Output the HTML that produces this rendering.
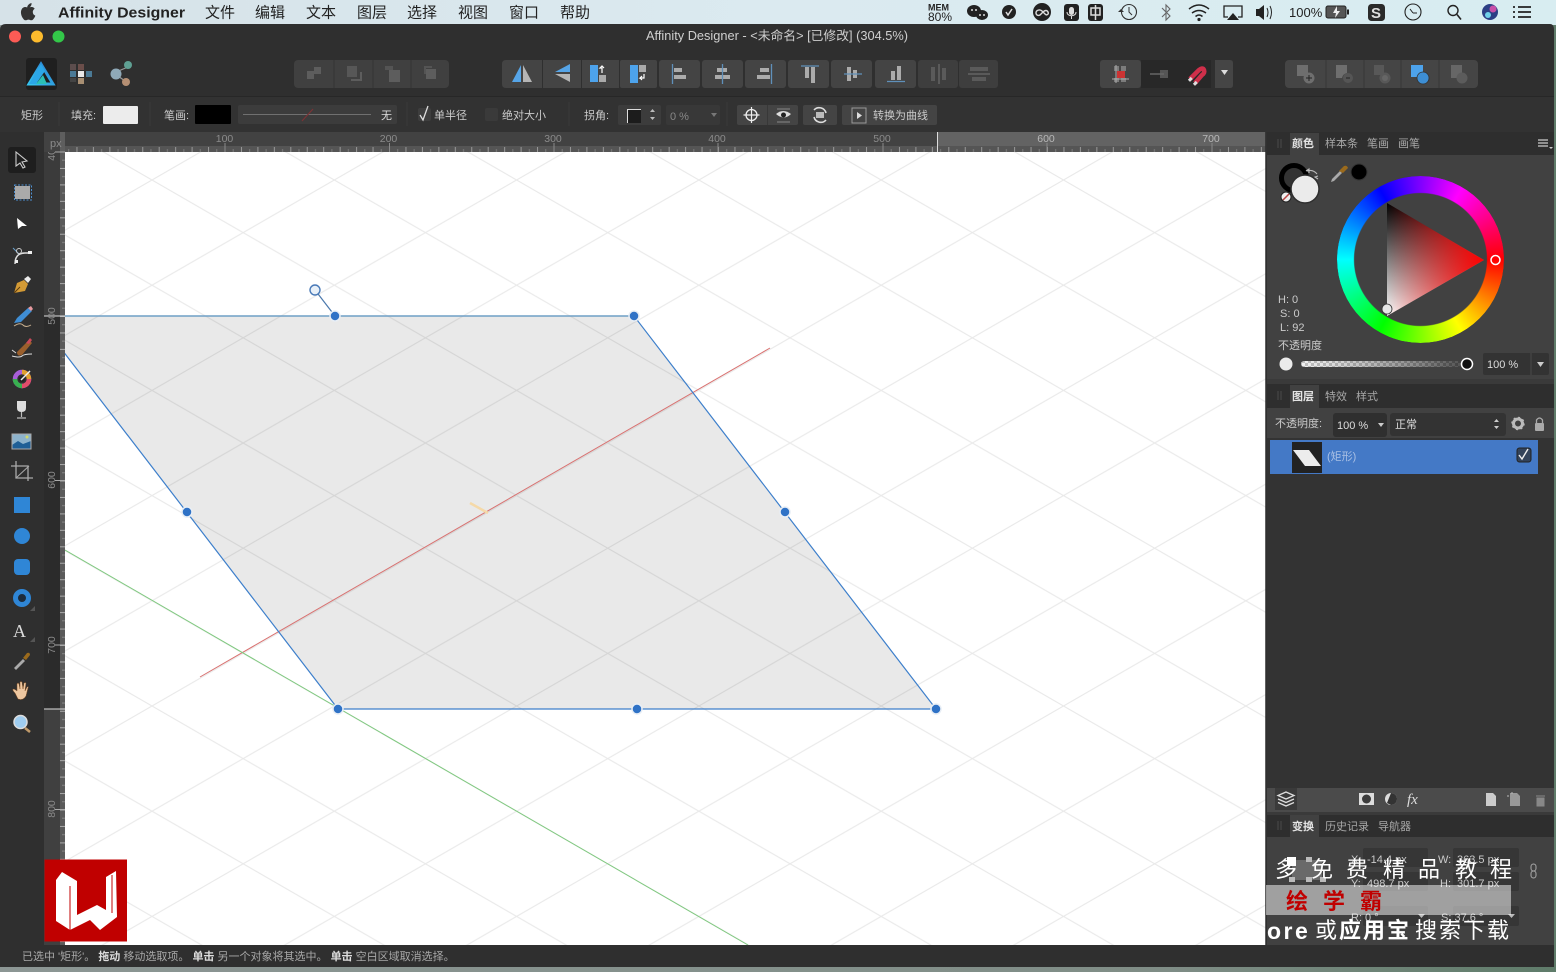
<!DOCTYPE html>
<html lang="zh"><head><meta charset="utf-8"><title>Affinity Designer</title>
<style>
html,body{margin:0;padding:0;background:#7f8c88;width:1556px;height:972px;overflow:hidden}
svg{position:absolute;left:0;top:0;display:block}
text{font-family:"Liberation Sans","Noto Sans CJK SC",sans-serif;font-size:11px;fill:#cbcbcb}
.m{font-size:15px;fill:#222}
.t{fill:#a8a8a8}
.r{font-size:10.5px;fill:#8b8b8b}
.w{font-size:22px;fill:#fff}
#wheel{position:absolute;left:1337px;top:176px;width:167px;height:167px;border-radius:50%;
background:conic-gradient(from 90deg,#f00,#ff0,#0f0,#0ff,#00f,#f0f,#f00);
-webkit-mask:radial-gradient(circle,transparent 66px,#000 67px);mask:radial-gradient(circle,transparent 66px,#000 67px)}
</style></head><body>
<svg width="1556" height="972" viewBox="0 0 1556 972">
<defs>
<linearGradient id="mb" x1="0" x2="1" y1="0" y2="0"><stop offset="0" stop-color="#d6e2e8"/><stop offset=".5" stop-color="#dbeaf0"/><stop offset="1" stop-color="#d8edf1"/></linearGradient>
<linearGradient id="wp" x1="0" x2="1" y1="0" y2="0"><stop offset="0" stop-color="#8c9694"/><stop offset=".75" stop-color="#7f8d86"/><stop offset="1" stop-color="#5f7c6a"/></linearGradient>
<pattern id="grid" patternUnits="userSpaceOnUse" x="152" y="180" width="182.3" height="105.2"><path d="M0 0L182.3 105.2M0 105.2L182.3 0" stroke="#000" stroke-opacity=".085" stroke-width="1.1" fill="none"/></pattern>
<pattern id="tx" patternUnits="userSpaceOnUse" x="60.0" y="146" width="16.45" height="6"><rect width="16.45" height="6" fill="#555"/><rect x="0" y="1" width="1" height="5" fill="#999"/><rect x="8.2" y="3" width="1" height="3" fill="#7c7c7c"/></pattern>
<pattern id="ty" patternUnits="userSpaceOnUse" x="60" y="151.5" width="6" height="16.45"><rect width="6" height="16.45" fill="#5a5a5a"/><rect x="0" y="0" width="6" height="1" fill="#a8a8a8"/><rect x="2" y="8.2" width="4" height="1" fill="#858585"/></pattern>
<pattern id="ch" patternUnits="userSpaceOnUse" width="6" height="6"><rect width="6" height="6" fill="#ddd"/><rect width="3" height="3" fill="#666"/><rect x="3" y="3" width="3" height="3" fill="#666"/></pattern>
<linearGradient id="fade" x1="0" x2="1" y1="0" y2="0"><stop offset="0" stop-color="#fff" stop-opacity=".6"/><stop offset="1" stop-color="#333" stop-opacity=".85"/></linearGradient>
<linearGradient id="tb" x1="0" x2="0" y1="0" y2="1"><stop offset="0" stop-color="#000"/><stop offset="1" stop-color="#fff"/></linearGradient>
<linearGradient id="tr" gradientUnits="userSpaceOnUse" x1="1387" x2="1484" y1="0" y2="0"><stop offset="0" stop-color="#f00" stop-opacity="0"/><stop offset="1" stop-color="#f00"/></linearGradient>
<linearGradient id="logo" x1="0" x2="1" y1="1" y2="0"><stop offset="0" stop-color="#36c5f0"/><stop offset="1" stop-color="#2a7fd0"/></linearGradient>
<clipPath id="cv"><rect x="65" y="152" width="1201" height="793"/></clipPath>
<clipPath id="lr"><rect x="44" y="152" width="21" height="793"/></clipPath>
</defs>

<rect width="1556" height="972" fill="url(#wp)"/>
<rect width="1556" height="25" fill="url(#mb)"/>
<!-- window -->
<path d="M0 30Q0 24 6 24H1550Q1554 24 1554 30V962Q1554 967 1549 967H6Q0 967 0 962Z" fill="#2f2f2f"/>

<!-- menu bar -->
<path d="M30.400 7.600c.8-1 1.300-2.200 1.200-3.500-1.200.1-2.500.8-3.300 1.800-.7.800-1.300 2.100-1.100 3.300 1.200.1 2.400-.6 3.200-1.600zM32.800 13c0-2.200 1.800-3.200 1.900-3.300-1-1.500-2.600-1.700-3.200-1.700-1.300-.1-2.600.8-3.300.8s-1.700-.8-2.900-.8c-1.500 0-2.900.9-3.600 2.200-1.600 2.700-.4 6.700 1.100 8.900.7 1.100 1.600 2.300 2.800 2.200 1.100 0 1.500-.7 2.900-.7s1.700.7 2.900.7 2-1.100 2.700-2.200c.9-1.200 1.200-2.400 1.200-2.500-.1 0-2.500-.9-2.500-3.600z" fill="#333" transform="translate(0,-1)"/>
<text x="58" y="17.500" class="m" style="font-weight:bold" textLength="127" lengthAdjust="spacingAndGlyphs">Affinity Designer</text>
<text x="205" y="17.500" class="m">文件</text><text x="255" y="17.500" class="m">编辑</text><text x="306" y="17.500" class="m">文本</text><text x="357" y="17.500" class="m">图层</text><text x="407" y="17.500" class="m">选择</text><text x="458" y="17.500" class="m">视图</text><text x="509" y="17.500" class="m">窗口</text><text x="560" y="17.500" class="m">帮助</text>
<!-- status icons -->
<text x="928" y="10.500" style="font-size:9px;fill:#222;font-weight:bold">MEM</text><text x="928" y="21" style="font-size:12px;fill:#222">80%</text>
<g fill="#222"><ellipse cx="974" cy="11" rx="7" ry="6"/><ellipse cx="982" cy="15" rx="6" ry="5"/><circle cx="1009" cy="12" r="7"/><rect x="1064" y="4" width="15" height="17" rx="3"/><rect x="1088" y="4" width="15" height="17" rx="3"/></g>
<circle cx="972" cy="10" r="1" fill="#ddd"/><circle cx="976" cy="10" r="1" fill="#ddd"/><circle cx="980" cy="15" r="1" fill="#ddd"/><circle cx="984" cy="15" r="1" fill="#ddd"/>
<path d="M1006 12l2 3 4-6" stroke="#ddd" stroke-width="1.500" fill="none"/>
<circle cx="1042" cy="12" r="9" fill="#222"/><path d="M1036 13c0-3 4-4 6-2l3 3c2 2 4 0 3-2s-3-2-5 0l-3 3c-2 1-4 0-4-2z" stroke="#ddd" stroke-width="1.400" fill="none"/>
<rect x="1069" y="7" width="5" height="8" rx="2.500" fill="#ddd"/><path d="M1067 12c0 5 9 5 9 0M1071.500 16v3" stroke="#ddd" fill="none"/>
<path d="M1091 8h9v7h-9zM1095.500 5v15" stroke="#ddd" stroke-width="1.500" fill="none"/>
<circle cx="1129" cy="12" r="7.500" fill="none" stroke="#333" stroke-width="1.100"/><path d="M1129 7v5l3 3" fill="none" stroke="#333"/><path d="M1118 12l3-3 3 3z" fill="#333"/>
<path d="M1162 8l8 8-4 4v-15l4 4-8 8" fill="none" stroke="#666" stroke-width="1.100"/>
<path d="M1189 9q10-8 20 0M1192 13q7-5 14 0M1195.500 16.500q3.500-3 7 0" fill="none" stroke="#222" stroke-width="1.500"/><circle cx="1199" cy="19.500" r="1.600" fill="#222"/>
<path d="M1228 17h-4V6h18v11h-4" fill="none" stroke="#222" stroke-width="1.300"/><path d="M1233 13l6 7h-12z" fill="#222"/>
<path d="M1256 9h3l5-4v15l-5-4h-3z" fill="#222"/><path d="M1267 8q2 4.500 0 9M1270 6q3 6 0 13" fill="none" stroke="#222"/>
<text x="1289" y="17" style="font-size:13px;fill:#222">100%</text>
<rect x="1326" y="6" width="20" height="12" rx="2" fill="#555" stroke="#222"/><rect x="1347" y="9.500" width="2" height="5" fill="#222"/><path d="M1337 6l-4 7h3l-1 5 5-7h-3z" fill="#eee"/>
<rect x="1368" y="4" width="17" height="17" rx="3.500" fill="#2a2a2a"/><text x="1371" y="18" style="font-size:15px;font-weight:bold;fill:#ddd">S</text>
<circle cx="1413" cy="12" r="8" fill="none" stroke="#222" stroke-width="1.100"/><path d="M1413 13h4M1413 13l-3-4" stroke="#222" fill="none"/>
<circle cx="1453" cy="10.500" r="5" fill="none" stroke="#222" stroke-width="1.400"/><path d="M1457 14.500l4 5" stroke="#222" stroke-width="1.600"/>
<circle cx="1490" cy="12" r="8" fill="#2c3f85"/><circle cx="1493" cy="9" r="3.500" fill="#c74fa8"/><circle cx="1488" cy="15" r="3" fill="#6fd0e8"/>
<path d="M1513 7h2M1513 12h2M1513 17h2M1518 7h13M1518 12h13M1518 17h13" stroke="#222" stroke-width="1.800"/>

<!-- title -->
<circle cx="15" cy="36.500" r="6" fill="#fc5b55"/><circle cx="37" cy="36.500" r="6" fill="#fdbb2d"/><circle cx="58.500" cy="36.500" r="6" fill="#33c749"/>
<text x="646" y="40" style="font-size:12.5px;fill:#cfcfcf" textLength="262" lengthAdjust="spacingAndGlyphs">Affinity Designer - &lt;未命名&gt; [已修改] (304.5%)</text>

<!-- personas -->
<rect x="26" y="58" width="31" height="32" rx="3" fill="#1f1f1f"/>
<path d="M41 64L53 84H29Z" fill="none" stroke="url(#logo)" stroke-width="3"/><path d="M29 84L41 64 45 71 36 84Z" fill="#2ba7e8"/><path d="M36 84L43 75 47 84Z" fill="#2cc0b5"/>
<rect x="70" y="64" width="6" height="6" fill="#5c4d4d"/><rect x="78" y="64" width="6" height="6" fill="#6b4e4a"/><rect x="70" y="71" width="6" height="6" fill="#4b7a96"/><rect x="78" y="71" width="6" height="6" fill="#e8e8e8"/><rect x="86" y="71" width="6" height="6" fill="#4b7a96"/><rect x="78" y="78" width="6" height="6" fill="#a88f73"/><rect x="70" y="78" width="6" height="4" fill="#444"/>
<path d="M116 72L128 67M118 76L125 81" stroke="#999" stroke-width="1.200"/>
<circle cx="116" cy="74" r="5.500" fill="#8fa9b8"/><circle cx="128" cy="65" r="4" fill="#5fa093"/><circle cx="126" cy="82" r="4" fill="#b58f73"/>

<!-- toolbar group 1 -->
<g>
<rect x="294" y="60" width="155" height="28" rx="4" fill="#404040"/>
<path d="M334 60v28M373 60v28M411 60v28" stroke="#333"/>
<g fill="#5d5d5d"><rect x="307" y="71" width="7" height="8"/><rect x="314" y="67" width="7" height="7"/><rect x="347" y="66" width="10" height="11" opacity=".8"/><path d="M351 79h9V72h2v9h-11z"/><rect x="385" y="66" width="8" height="4" opacity=".7"/><rect x="389" y="70" width="11" height="12"/><rect x="426" y="69" width="10" height="10"/><path d="M424 66h8v2h-6v6h-2z" opacity=".7"/></g>
</g>
<!-- toolbar group 2 -->
<g fill="#444">
<path d="M506 60h36v28h-36q-4 0-4-4v-20q0-4 4-4z"/><rect x="543" y="60" width="38" height="28"/><rect x="582" y="60" width="37" height="28"/><rect x="620" y="60" width="37" height="28" rx="2"/>
<rect x="659" y="60" width="41" height="28" rx="3"/><rect x="702" y="60" width="41" height="28" rx="3"/><rect x="745" y="60" width="41" height="28" rx="3"/><rect x="788" y="60" width="41" height="28" rx="3"/><rect x="831" y="60" width="41" height="28" rx="3"/><rect x="875" y="60" width="41" height="28" rx="3"/>
<rect x="918" y="60" width="40" height="28" rx="3" fill="#3e3e3e"/><rect x="959" y="60" width="39" height="28" rx="3" fill="#3e3e3e"/>
</g>
<path d="M521 65v17h-9z" fill="#56a5e8"/><path d="M523 65v17h9z" fill="#b5b5b5"/>
<path d="M570 64v8h-15z" fill="#56a5e8"/><path d="M570 82v-8h-15z" fill="#b5b5b5"/>
<rect x="590" y="65" width="8" height="17" fill="#4da3ec"/><rect x="599" y="75" width="7" height="7" fill="#aaa"/><path d="M602 73v-5h-2l2-2 2 2" fill="none" stroke="#fff" stroke-width="1.200"/>
<rect x="630" y="65" width="8" height="18" fill="#4da3ec"/><rect x="639" y="65" width="7" height="7" fill="#aaa"/><path d="M644 74v4h-4l2-2m-2 2l2 2" fill="none" stroke="#fff" stroke-width="1.200"/>
<g fill="#ababab"><rect x="674" y="68" width="8" height="4"/><rect x="674" y="75" width="12" height="4"/><rect x="717" y="68" width="10" height="4"/><rect x="715" y="75" width="15" height="4"/><rect x="760" y="68" width="9" height="4"/><rect x="757" y="75" width="13" height="4"/>
<rect x="805" y="67" width="4" height="11"/><rect x="811" y="67" width="4" height="16"/><rect x="847" y="67" width="4" height="14"/><rect x="853" y="70" width="4" height="8"/><rect x="891" y="71" width="4" height="9"/><rect x="897" y="66" width="4" height="14"/></g>
<path d="M672.500 64v20M722.500 64v20M771.500 64v20" stroke="#5f90ba" stroke-width="1.300"/>
<path d="M801 66h18M844 74h18M887 81.500h18" stroke="#5f90ba" stroke-width="1.300"/>
<g fill="#5a5a5a"><rect x="931" y="67" width="4" height="14"/><rect x="938" y="64" width="2" height="20"/><rect x="942" y="68" width="4" height="12"/><rect x="970" y="67" width="18" height="4"/><rect x="968" y="73" width="22" height="2"/><rect x="972" y="77" width="14" height="4"/></g>

<!-- group 3 -->
<rect x="1100" y="60" width="41" height="28" rx="3" fill="#454545"/><rect x="1141" y="60" width="70" height="28" fill="#282828"/><path d="M1215 60h15q3 0 3 3v22q0 3-3 3h-15z" fill="#454545"/>
<g fill="#7c7c7c"><rect x="1114" y="66" width="5" height="5"/><rect x="1121" y="66" width="5" height="5"/><rect x="1114" y="78" width="5" height="4"/><rect x="1121" y="78" width="5" height="4"/></g>
<rect x="1117" y="71" width="8" height="7" fill="#c33"/><path d="M1112 79h17M1116 65v18" stroke="#aaa"/>
<rect x="1160" y="70" width="8" height="8" fill="#555"/><path d="M1150 74h14" stroke="#666" stroke-width="1.500"/>
<path d="M1190 79l9-9q4-3 5 0 1 3-2 5l-7 8" fill="none" stroke="#cf2f4a" stroke-width="4.500"/><rect x="1188" y="78" width="4" height="3" fill="#ddd" transform="rotate(-45 1190 79)"/><rect x="1193" y="82" width="4" height="3" fill="#ddd" transform="rotate(-45 1195 83)"/>
<path d="M1221 70h7l-3.500 5z" fill="#ddd"/>
<!-- group 4 -->
<rect x="1285" y="60" width="193" height="28" rx="4" fill="#454545"/><path d="M1326 60v28M1364 60v28M1401 60v28M1439 60v28" stroke="#383838"/>
<rect x="1297" y="65" width="11" height="11" fill="#6e6e6e"/><circle cx="1309" cy="78" r="5.500" fill="#6e6e6e"/><path d="M1306 78h6M1309 75v6" stroke="#222"/>
<path d="M1336 65h11v8a6 6 0 0 0-5 5h-6z" fill="#6e6e6e"/><circle cx="1348" cy="78" r="5" fill="#555"/><path d="M1346 78h4" stroke="#222"/>
<rect x="1374" y="65" width="10" height="10" fill="#585858"/><circle cx="1385" cy="78" r="5.500" fill="#585858"/><circle cx="1385" cy="78" r="3" fill="#666"/>
<rect x="1411" y="65" width="12" height="12" fill="#4da3ec"/><circle cx="1423" cy="78" r="6" fill="#3d8ed4" stroke="#333" stroke-width=".8"/>
<path d="M1451 65h11v8a6 6 0 0 0-5 5h-6z" fill="#666"/><circle cx="1462" cy="78" r="5.500" fill="#5c5c5c"/>

<path d="M0 96.500H1266" stroke="#262626"/>
<rect x="0" y="97" width="1554" height="35" fill="#323232"/><path d="M0 96.500H1554" stroke="#272727"/>

<!-- context bar -->
<text x="21" y="119">矩形</text><text x="71" y="119">填充:</text>
<rect x="103" y="106" width="35" height="18" rx="1" fill="#ececec"/>
<text x="164" y="119">笔画:</text><rect x="195" y="105" width="36" height="19" rx="1" fill="#000"/>
<rect x="238" y="105" width="159" height="19" rx="2" fill="#3c3c3c"/><path d="M243 114.500H371" stroke="#707070"/><path d="M302 121l11-12" stroke="#7b3235" stroke-width="1.200"/>
<text x="381" y="119" style="fill:#ddd">无</text>
<path d="M59 102v24M150 102v24M407 102v24M569 102v24M727 102v24" stroke="#3a3a3a"/>
<rect x="418" y="108" width="13" height="13" rx="2" fill="#3e3e3e"/><path d="M420 115l3 5 5-14" fill="none" stroke="#ddd" stroke-width="1.300"/>
<text x="434" y="119">单半径</text><rect x="485" y="108" width="13" height="13" rx="2" fill="#3a3a3a"/><text x="502" y="119">绝对大小</text>
<text x="584" y="119">拐角:</text>
<rect x="618" y="105" width="43" height="20" rx="2" fill="#3c3c3c"/><rect x="627" y="109" width="14" height="14" fill="#1c1c1c"/><path d="M627.500 123V109.500H641" stroke="#ddd" fill="none"/>
<path d="M650 112l2.500-3 2.500 3zM650 117l2.500 3 2.500-3z" fill="#bbb"/>
<rect x="666" y="105" width="54" height="20" rx="2" fill="#383838"/><text x="670" y="120" style="fill:#888">0 %</text><path d="M711 113h6l-3 4z" fill="#777"/>
<rect x="737" y="105" width="61" height="20" rx="2" fill="#444"/><path d="M767.500 105v20" stroke="#383838"/>
<circle cx="751.500" cy="115" r="5.500" fill="none" stroke="#eee" stroke-width="1.300"/><path d="M751.500 107v16M743.500 115h16" stroke="#eee" stroke-width="1.200"/>
<path d="M776 114q7-6 15 0q-7 7-15 0z" fill="#ddd"/><circle cx="783.500" cy="115" r="2.500" fill="#222"/><path d="M777 109h13M777 122h13" stroke="#888"/>
<rect x="803" y="105" width="34" height="20" rx="2" fill="#444"/><path d="M814 110a7 7 0 0 1 12 3M826 120a7 7 0 0 1-12-3" fill="none" stroke="#ddd" stroke-width="1.600"/><rect x="816" y="112" width="8" height="6" fill="#bbb"/>
<rect x="842" y="105" width="95" height="20" rx="2" fill="#444"/><rect x="852" y="108" width="14" height="15" fill="none" stroke="#999"/><path d="M857 112l5 3.500-5 3.500z" fill="#ddd"/>
<text x="873" y="119">转换为曲线</text>

<!-- canvas -->
<rect x="65" y="152" width="1201" height="793" fill="#fff"/>
<g clip-path="url(#cv)">
<path d="M36 316H634L936 709H338Z" fill="#e9e9e9"/>
<rect x="65" y="152" width="1201" height="793" fill="url(#grid)"/>
<path d="M200 677L770 348" stroke="#d9706f" stroke-width="1"/>
<path d="M65 550L748 945" stroke="#7fc97f" stroke-width="1"/>
<path d="M470 503L488 513" stroke="#f5d9a8" stroke-width="2.500"/>
<path d="M36 316L338 709H936L634 316" fill="none" stroke="#3d7fcb" stroke-width="1.200"/>
<path d="M65 316H634" stroke="#6f9fc6" stroke-width="1.400"/>
<path d="M335 316L315 290" stroke="#4a78ac" stroke-width="1.200"/>
<circle cx="315" cy="290" r="5" fill="#e8f0f8" stroke="#4a7ab8" stroke-width="1.400"/>
<g fill="#2f72c6" stroke="#e8eef5" stroke-width="1.500"><circle cx="335" cy="316" r="5"/><circle cx="634" cy="316" r="5"/><circle cx="187" cy="512" r="5"/><circle cx="785" cy="512" r="5"/><circle cx="338" cy="709" r="5"/><circle cx="637" cy="709" r="5"/><circle cx="936" cy="709" r="5"/></g>
</g>

<!-- top ruler -->
<rect x="44" y="132" width="893" height="20" fill="#424242"/><rect x="937" y="132" width="329" height="20" fill="#636363"/>
<rect x="60" y="132" width="5" height="20" fill="#5e5e5e"/>
<rect x="65" y="146" width="1201" height="6" fill="url(#tx)"/><path d="M937.500 132v20" stroke="#ddd"/>
<g stroke="#8a8a8a"><path d="M225 143v9M389.500 143v9M554 143v9M718 143v9M883 143v9M1047 143v9M1212 143v9"/></g>
<g class="r" text-anchor="middle"><text x="224.500" y="142" class="r">100</text><text x="388.500" y="142" class="r">200</text><text x="553" y="142" class="r">300</text><text x="717" y="142" class="r">400</text><text x="882" y="142" class="r">500</text><text x="1046" y="142" class="r" style="fill:#b8b8b8">600</text><text x="1211" y="142" class="r" style="fill:#b8b8b8">700</text></g>
<text x="50" y="147" style="font-size:11px;fill:#8b8b8b">px</text>
<!-- left ruler -->
<rect x="44" y="152" width="16" height="164" fill="#3b3b3b"/><rect x="44" y="316" width="16" height="393" fill="#2b2b2b"/><rect x="44" y="709" width="16" height="236" fill="#404040"/>
<rect x="60" y="152" width="5" height="793" fill="url(#ty)"/>
<path d="M44 316h21M44 709h21" stroke="#ddd"/><path d="M55 152h10M55 480.500h10M55 645h10M55 809.500h10" stroke="#aaa"/>
<g clip-path="url(#lr)"><text transform="translate(55 152) rotate(-90)" text-anchor="middle" class="r">400</text><text transform="translate(55 316) rotate(-90)" text-anchor="middle" class="r">500</text><text transform="translate(55 480) rotate(-90)" text-anchor="middle" class="r">600</text><text transform="translate(55 645) rotate(-90)" text-anchor="middle" class="r">700</text><text transform="translate(55 809) rotate(-90)" text-anchor="middle" class="r">800</text></g>

<!-- tools -->
<rect x="8" y="147" width="28" height="26" rx="3" fill="#1e1e1e"/>
<path d="M16 152l0 14 4-3 3 5 2-1-3-5 5-1z" fill="none" stroke="#ccc" stroke-width="1.100"/>
<rect x="15" y="186" width="15" height="13" fill="#aaa"/><rect x="14.500" y="185" width="17" height="15" fill="none" stroke="#4d8fd0" stroke-dasharray="2 1.500"/>
<path d="M17 218L27 226 22 226 18 229Z" fill="#fff"/>
<path d="M15 264q0-11 10-11h5" fill="none" stroke="#ddd" stroke-width="1.500"/><path d="M13 248l6 6" stroke="#6aa0cc"/><rect x="15" y="260" width="3" height="3" fill="#eee"/><rect x="28" y="251" width="4" height="3" fill="#eee"/><circle cx="19" cy="251" r="2.500" fill="none" stroke="#ccc"/>
<path d="M14 293l3-10 7-3 4 4-3 7z" fill="#d39a35"/><path d="M24 279l4-3 3 3-3 4z" fill="#eee"/><path d="M14 293l6-6" stroke="#5a3a10"/>
<path d="M14 323l3-5 11-10 4 3-11 11z" fill="#3f8ed4"/><path d="M28 308l3-2 2 3-2 2z" fill="#e79aa0"/><path d="M14 326q6-4 9-1t8 0" fill="none" stroke="#c8b090"/>
<path d="M17 352l12-12 3 3-10 12q-5 2-5-3z" fill="#9a5f2c"/><path d="M26 343l4-5 2 2-3 4z" fill="#c9495a"/><path d="M12 350l4 3M12 356q8 2 10 0t10-2" fill="none" stroke="#ddd"/>
<circle cx="22" cy="379" r="7" fill="none" stroke="#a85ed8" stroke-width="4.500"/><path d="M22 372a7 7 0 0 1 7 7" fill="none" stroke="#e0a030" stroke-width="4.500"/><path d="M15 379a7 7 0 0 0 7 7" fill="none" stroke="#38b050" stroke-width="4.500"/><path d="M22 386a7 7 0 0 0 7-7" fill="none" stroke="#e04d6a" stroke-width="4.500"/><circle cx="22" cy="379" r="3" fill="#222"/><path d="M21 380l9-9" stroke="#eee" stroke-width="1.500"/>
<path d="M17 401h9v7q0 4-4.500 4t-4.500-4z" fill="#ddd"/><path d="M21.500 412v5M17 418h9" stroke="#bbb" stroke-width="1.200"/>
<rect x="12" y="434" width="19" height="15" fill="#8db3cc"/><path d="M12 445l6-4 5 3 8-3v8H12z" fill="#1f5f96"/><rect x="12" y="434" width="19" height="15" fill="none" stroke="#aaa"/><circle cx="27" cy="437" r="1.500" fill="#d2d96a"/>
<path d="M13 466h17v15M18 461v17h17" transform="translate(-2,0)" fill="none" stroke="#aaa" stroke-width="1.300"/><path d="M16 478l13-12" stroke="#aaa"/>
<rect x="14" y="497" width="16" height="16" fill="#2f86d6"/>
<circle cx="22" cy="536" r="8" fill="#2f86d6"/>
<rect x="14" y="559" width="16" height="16" rx="4" fill="#2f86d6"/>
<circle cx="22" cy="598" r="6.500" fill="#1d2c3c" stroke="#2f86d6" stroke-width="5"/><path d="M30 611l5-5v5z" fill="#555"/>
<text x="13" y="637" style="font-family:'Liberation Serif',serif;font-size:18px;fill:#ddd">A</text><path d="M30 642l5-5v5z" fill="#555"/>
<path d="M14 668l9-9 2 2-9 9z" fill="#aaa"/><path d="M23 658l4-5q3-1 3 2l-4 5z" fill="#9a6a1c"/>
<path d="M15 693q-3-3-2-4 2 0 4 2l0-7q1-2 2 0l1 5 0-7q1-1 2 0l1 7 1-6q2-1 2 0l-1 8 2-4q2-1 1 1l-2 8q-3 5-8 3z" fill="#eec7a0" stroke="#7a4a20" stroke-width=".5"/>
<path d="M25 728l5 4" stroke="#c09a6a" stroke-width="2.500"/><circle cx="20.500" cy="722" r="6.500" fill="#9fcdf0" stroke="#ddd" stroke-width="1.500"/>

<!-- right panel -->
<rect x="1266" y="132" width="288" height="813" fill="#414141"/>
<path d="M1266 132v813" stroke="#2b2b2b" stroke-width="1.500"/>
<rect x="1267" y="132" width="287" height="23" fill="#2e2e2e"/><rect x="1290" y="133" width="29" height="22" fill="#414141"/>
<path d="M1278 139v9M1281 139v9" stroke="#4a4a4a"/>
<text x="1292" y="147" style="fill:#e4e4e4;font-weight:bold">颜色</text><text x="1325" y="147" class="t">样本条</text><text x="1367" y="147" class="t">笔画</text><text x="1398" y="147" class="t">画笔</text>
<path d="M1538 140h10M1538 143h10M1538 146h10" stroke="#ccc" stroke-width="1.200"/><path d="M1549 147h4l-2 2z" fill="#ccc"/>

<circle cx="1294" cy="178" r="12.500" fill="#333" stroke="#000" stroke-width="5"/><circle cx="1305" cy="189" r="14" fill="#ebebeb" stroke="#2f2f2f" stroke-width="1.500"/>
<path d="M1307 171q6-2 10 3M1318 176l-3 1 3 2M1306 171l3-2v4" fill="none" stroke="#bbb" stroke-width="1.100"/>
<circle cx="1286" cy="197" r="5" fill="#eee" stroke="#222"/><path d="M1283 200l6-6" stroke="#b84444" stroke-width="1.500"/>
<path d="M1332 179l8-8 2 2-8 8-3 1z" fill="#aaa"/><path d="M1339 171l5-5q3-1 4 2l-5 5z" fill="#9a6a1c"/>
<circle cx="1359" cy="172" r="8" fill="#000" stroke="#333"/>

<text x="1278" y="303">H: 0</text><text x="1280" y="317">S: 0</text><text x="1280" y="331">L: 92</text>
<text x="1278" y="349">不透明度</text>
<circle cx="1286" cy="364" r="6.500" fill="#ebebeb"/>
<rect x="1301" y="361" width="166" height="6" rx="3" fill="url(#ch)"/><rect x="1301" y="361" width="166" height="6" rx="3" fill="url(#fade)"/>
<rect x="1483" y="353" width="66" height="22" rx="2" fill="#333"/><path d="M1531 353v22" stroke="#484848"/><text x="1487" y="368" style="fill:#ddd">100 %</text><path d="M1537 362h7l-3.500 5z" fill="#ccc"/>

<path d="M1387 203L1484 260 1387 316Z" fill="url(#tb)"/><path d="M1387 203L1484 260 1387 316Z" fill="url(#tr)"/>

<!-- layers panel -->
<rect x="1267" y="379" width="287" height="5" fill="#3a3a3a"/>
<rect x="1267" y="384" width="287" height="24" fill="#2e2e2e"/><rect x="1290" y="385" width="29" height="23" fill="#414141"/>
<path d="M1278 391v9M1281 391v9" stroke="#4a4a4a"/>
<text x="1292" y="400" style="fill:#e4e4e4;font-weight:bold">图层</text><text x="1325" y="400" class="t">特效</text><text x="1356" y="400" class="t">样式</text>
<text x="1275" y="427">不透明度:</text>
<rect x="1333" y="413" width="54" height="24" rx="3" fill="#2f2f2f"/><text x="1337" y="429" style="fill:#ddd">100 %</text><path d="M1378 423h6l-3 4z" fill="#ccc"/>
<rect x="1390" y="413" width="116" height="23" rx="3" fill="#333"/><text x="1395" y="428" style="fill:#ddd">正常</text><path d="M1494 422l2.500-3 2.500 3zM1494 426l2.500 3 2.500-3z" fill="#ccc"/>
<circle cx="1518" cy="423.500" r="4.500" fill="none" stroke="#bbb" stroke-width="3"/><circle cx="1518" cy="423.500" r="6" fill="none" stroke="#bbb" stroke-width="1.500" stroke-dasharray="2 2.700"/>
<rect x="1535" y="423" width="9" height="8" rx="1" fill="#aaa"/><path d="M1536.500 423v-3q3-4 6 0v3" fill="none" stroke="#aaa" stroke-width="1.300"/>
<rect x="1267" y="438" width="287" height="350" fill="#333"/>
<rect x="1270" y="440" width="268" height="34" fill="#4479c6"/>
<rect x="1292" y="442" width="30" height="31" fill="#222"/><path d="M1293 450H1309L1321 466H1305Z" fill="#ececec"/>
<text x="1327" y="460" style="fill:#a9c0e4">(矩形)</text>
<rect x="1517" y="448" width="14" height="14" rx="2.500" fill="#33435a" stroke="#222"/><path d="M1519 455l3 4 6-10" fill="none" stroke="#eee" stroke-width="1.400"/>

<!-- bottom bar -->
<rect x="1267" y="788" width="287" height="24" fill="#4b4b4b"/><rect x="1275" y="788" width="22" height="22" fill="#3a3a3a"/>
<g fill="none" stroke="#ddd" stroke-width="1.300"><path d="M1286 792l8 3.500-8 3.500-8-3.500z"/><path d="M1278 799l8 3.500 8-3.500M1278 802.500l8 3.500 8-3.500"/></g>
<rect x="1359" y="793" width="15" height="12" fill="#ddd"/><circle cx="1366.500" cy="799" r="4.500" fill="#3c3c3c"/>
<circle cx="1391" cy="799" r="6" fill="#ddd"/><path d="M1391 793a6 6 0 0 1 0 12l-4-2z" fill="#333"/>
<text x="1407" y="804" style="font-family:'Liberation Serif',serif;font-style:italic;font-size:15px;fill:#ddd">fx</text>
<path d="M1486 793h7l3 3v10h-10z" fill="#ccc"/><path d="M1510 793h7l3 3v10h-10z" fill="#999"/><path d="M1511 793h2M1507 796h2" stroke="#bbb"/>
<path d="M1536 796h9M1537 798h7v8h-7z" fill="#888" stroke="#888"/>

<!-- transform panel -->
<rect x="1267" y="812" width="287" height="3" fill="#3a3a3a"/>
<rect x="1267" y="815" width="287" height="22" fill="#2e2e2e"/><rect x="1290" y="815" width="29" height="22" fill="#414141"/>
<path d="M1278 821v9M1281 821v9" stroke="#4a4a4a"/>
<text x="1292" y="830" style="fill:#e4e4e4;font-weight:bold">变换</text><text x="1325" y="830" class="t">历史记录</text><text x="1378" y="830" class="t">导航器</text>
<g fill="#363636"><rect x="1363" y="848" width="65" height="19" rx="2"/><rect x="1453" y="848" width="66" height="19" rx="2"/><rect x="1363" y="872" width="65" height="19" rx="2"/><rect x="1453" y="872" width="66" height="19" rx="2"/><rect x="1363" y="906" width="65" height="20" rx="2"/><rect x="1453" y="906" width="66" height="20" rx="2"/></g>
<text x="1351" y="863">X:</text><text x="1438" y="863">W:</text><text x="1351" y="887">Y:</text><text x="1440" y="887">H:</text>
<text x="1367" y="863">-14.4 px</text><text x="1457" y="863">363.5 px</text><text x="1367" y="887">498.7 px</text><text x="1457" y="887">301.7 px</text>
<rect x="1531" y="864" width="5" height="7" rx="2.500" fill="none" stroke="#aaa"/><rect x="1531" y="871" width="5" height="7" rx="2.500" fill="none" stroke="#aaa"/>
<text x="1351" y="921">R: 0 °</text><text x="1441" y="921">S: 37.6 °</text>
<path d="M1418 914h7l-3.500 4zM1508 914h7l-3.500 4z" fill="#bbb"/>

<!-- watermark icon -->
<rect x="1292" y="860" width="30" height="20" fill="#6a6a6a"/><rect x="1287" y="857" width="9" height="9" fill="#fff"/>
<g fill="#bbb"><rect x="1289" y="877" width="6" height="5"/><rect x="1306" y="857" width="6" height="5"/><rect x="1306" y="877" width="6" height="5"/><rect x="1320" y="877" width="6" height="5"/></g>

<!-- watermark band -->
<rect x="1266" y="885" width="245" height="30" fill="#fff" fill-opacity=".5"/>
<g class="w"><text class="w" x="1275" y="877">多</text><text class="w" x="1311" y="877">免</text><text class="w" x="1346" y="877">费</text><text class="w" x="1383" y="877">精</text><text class="w" x="1418" y="877">品</text><text class="w" x="1455" y="877">教</text><text class="w" x="1490" y="877">程</text></g>
<text x="1286" y="909" style="font-size:22px;font-weight:bold;fill:#c00000">绘</text><text x="1323" y="909" style="font-size:22px;font-weight:bold;fill:#c00000">学</text><text x="1360" y="909" style="font-size:22px;font-weight:bold;fill:#c00000">霸</text>
<text x="1267" y="939" style="font-size:23px;font-weight:bold;fill:#fff;letter-spacing:2.500px">ore</text>
<text x="1315" y="938" style="font-size:22px;fill:#fff;letter-spacing:2px">或</text>
<text x="1339" y="938" style="font-size:22px;fill:#fff;font-weight:bold;letter-spacing:2px">应用宝</text>
<text x="1415" y="938" style="font-size:22px;fill:#fff;letter-spacing:2px">搜索下载</text>

<!-- red logo -->
<rect x="44.500" y="859.500" width="82.500" height="82" fill="#c00000"/>
<path d="M56 880L62 872 77 881V915L97 905 106 910V877L116 871 117 917 100 930 90 920 70 930 56 921Z" fill="#fff"/>
<path d="M70 886V930M112 875V913" stroke="#c00000" stroke-width="1"/>

<!-- status bar -->
<rect x="0" y="945" width="1554" height="22" fill="#2f2f2f"/>
<text x="22" y="960" style="font-size:11px;fill:#a8a8a8">已选中 '矩形'。 <tspan style="font-weight:bold;fill:#ddd">拖动</tspan> 移动选取项。 <tspan style="font-weight:bold;fill:#ddd">单击</tspan> 另一个对象将其选中。 <tspan style="font-weight:bold;fill:#ddd">单击</tspan> 空白区域取消选择。</text>
</svg>

<div id="wheel"></div>
<svg width="1556" height="972" viewBox="0 0 1556 972" style="pointer-events:none">
<circle cx="1495.500" cy="260" r="4.500" fill="none" stroke="#fff" stroke-width="1.500"/>
<circle cx="1387" cy="309" r="5" fill="#e6e6e6" stroke="#333" stroke-width=".8"/>
<circle cx="1467" cy="364" r="5.500" fill="#111" stroke="#fff" stroke-width="1.500"/>
</svg>
</body></html>
